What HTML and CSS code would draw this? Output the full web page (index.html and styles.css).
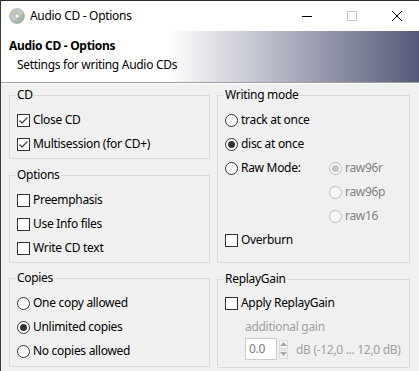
FILE: index.html
```html
<!DOCTYPE html>
<html>
<head>
<meta charset="utf-8">
<link rel="stylesheet" href="styles.css">
</head>
<body>
<div class="window">
  <div class="titlebar">
    <svg class="app-icon" width="16" height="16" viewBox="0 0 16 16">
      <defs>
        <linearGradient id="disc" x1="0" y1="0" x2="1" y2="1">
          <stop offset="0" stop-color="#e8e8ec"/>
          <stop offset="0.35" stop-color="#b9c7d6"/>
          <stop offset="0.5" stop-color="#d9d2a8"/>
          <stop offset="0.65" stop-color="#9fc0a8"/>
          <stop offset="1" stop-color="#9a9aa4"/>
        </linearGradient>
      </defs>
      <circle cx="8" cy="8" r="7.5" fill="url(#disc)" stroke="#9a9aa0" stroke-width="0.6"/>
      <path d="M2.2 6.5 A6 6 0 0 1 6.5 2.2" stroke="#e0b070" stroke-width="1.2" fill="none"/>
      <path d="M3 11.5 A6 6 0 0 0 5 13.3" stroke="#7fb6e0" stroke-width="1.2" fill="none"/>
      <circle cx="8" cy="8" r="2.6" fill="#d8d8dc" stroke="#a0a0a8" stroke-width="0.6"/>
      <circle cx="8" cy="8" r="1.2" fill="#ffffff"/>
    </svg>
    <span class="title">Audio CD - Options</span>
    <div class="controls">
      <div class="ctl"><svg width="10" height="10" viewBox="0 0 10 10"><path d="M0 5.5H10" stroke="#000" stroke-width="1"/></svg></div>
      <div class="ctl"><svg width="10" height="10" viewBox="0 0 10 10"><rect x="0.5" y="0.5" width="9" height="9" fill="none" stroke="#c8c8c8" stroke-width="1"/></svg></div>
      <div class="ctl"><svg width="10" height="10" viewBox="0 0 10 10"><path d="M0 0L10 10M10 0L0 10" stroke="#000" stroke-width="1"/></svg></div>
    </div>
  </div>
  <div class="header">
    <div class="h-title">Audio CD - Options</div>
    <div class="h-sub">Settings for writing Audio CDs</div>
  </div>
  <div class="content">
    <div class="col col-left">
      <div class="group g-cd">
        <span class="gtitle">CD</span>
        <div class="row"><span class="chk checked"><svg width="11" height="11" viewBox="0 0 11 11"><path d="M1.5 5.5L4 8L9.5 2.5" fill="none" stroke="#333" stroke-width="1.1"/></svg></span><span>Close CD</span></div>
        <div class="row"><span class="chk checked"><svg width="11" height="11" viewBox="0 0 11 11"><path d="M1.5 5.5L4 8L9.5 2.5" fill="none" stroke="#333" stroke-width="1.1"/></svg></span><span>Multisession (for CD+)</span></div>
      </div>
      <div class="group g-options">
        <span class="gtitle">Options</span>
        <div class="row"><span class="chk"></span><span>Preemphasis</span></div>
        <div class="row"><span class="chk"></span><span>Use Info files</span></div>
        <div class="row"><span class="chk"></span><span>Write CD text</span></div>
      </div>
      <div class="group g-copies">
        <span class="gtitle">Copies</span>
        <div class="row"><span class="radio"></span><span>One copy allowed</span></div>
        <div class="row"><span class="radio on"></span><span>Unlimited copies</span></div>
        <div class="row"><span class="radio"></span><span>No copies allowed</span></div>
      </div>
    </div>
    <div class="col col-right">
      <div class="group g-writing">
        <span class="gtitle">Writing mode</span>
        <div class="row"><span class="radio"></span><span>track at once</span></div>
        <div class="row"><span class="radio on"></span><span>disc at once</span></div>
        <div class="raw">
          <div class="row"><span class="radio"></span><span>Raw Mode:</span></div>
          <div class="raw-opts">
            <div class="row dis"><span class="radio on disabled"></span><span>raw96r</span></div>
            <div class="row dis"><span class="radio disabled"></span><span>raw96p</span></div>
            <div class="row dis"><span class="radio disabled"></span><span>raw16</span></div>
          </div>
        </div>
        <div class="row"><span class="chk"></span><span>Overburn</span></div>
      </div>
      <div class="group g-replay">
        <span class="gtitle">ReplayGain</span>
        <div class="row"><span class="chk"></span><span>Apply ReplayGain</span></div>
        <div class="sub">
          <div class="sub-label">additional gain</div>
          <div class="spin-row">
            <div class="spin-input">0.0</div>
            <div class="spin-btns">
              <div class="sbtn"><svg width="7" height="4" viewBox="0 0 7 4"><path d="M0 4L3.5 0L7 4Z" fill="#a8a8a8"/></svg></div>
              <div class="sbtn"><svg width="7" height="4" viewBox="0 0 7 4"><path d="M0 0L3.5 4L7 0Z" fill="#a8a8a8"/></svg></div>
            </div>
            <span class="unit">dB (-12,0 ... 12,0 dB)</span>
          </div>
        </div>
      </div>
    </div>
  </div>
</div>
</body>
</html>
```
FILE: styles.css
```css
* { box-sizing: border-box; }
html, body {
  margin: 0;
  padding: 0;
  width: 419px;
  height: 371px;
  overflow: hidden;
  background: #f0f0f0;
}
body {
  font-family: "Noto Sans", "Open Sans", sans-serif;
  font-size: 12px;
  letter-spacing: -0.3px;
  color: #000;
}
.window {
  width: 419px;
  height: 371px;
  border-left: 1px solid #3a3a3a;
  border-top: 1px solid #2a2a2a;
  background: #f0f0f0;
  overflow: hidden;
}
.titlebar {
  height: 30px;
  background: #fff;
  display: flex;
  align-items: center;
  padding-left: 8px;
}
.app-icon { display: block; flex: none; }
.title {
  margin-left: 5px;
  line-height: 16px;
}
.controls {
  margin-left: auto;
  display: flex;
  height: 30px;
}
.ctl {
  width: 45px;
  height: 30px;
  display: flex;
  align-items: center;
  justify-content: center;
}
.ctl svg { display: block; }
.header {
  height: 52px;
  background: linear-gradient(to right, #ffffff 0%, #ffffff 40%, #555a7a 100%);
  border-bottom: 1px solid #a0a0a0;
  box-shadow: 0 1px 0 #ffffff;
  padding: 7px 0 0 8px;
}
.h-title {
  font-weight: bold;
  line-height: 16px;
}
.h-sub {
  line-height: 16px;
  margin-top: 3px;
  padding-left: 8px;
}
.content {
  display: flex;
  gap: 7px;
  padding: 12px 0 0 8px;
}
.col {
  display: flex;
  flex-direction: column;
}
.col-left { width: 201px; }
.col-right { width: 193px; }
.group {
  position: relative;
  border: 1px solid #dcdcdc;
  padding: 12px 0 0 7px;
}
.gtitle {
  position: absolute;
  top: -9px;
  left: 6px;
  padding: 0 1px;
  line-height: 16px;
  background: #f0f0f0;
}
.g-cd { height: 64px; }
.g-options { height: 88px; margin-top: 16px; }
.g-copies { height: 89px; margin-top: 15px; }
.g-writing { height: 168px; }
.g-replay { height: 89px; margin-top: 16px; padding-top: 11px; }
.row {
  height: 24px;
  display: flex;
  align-items: center;
  gap: 3px;
  line-height: 16px;
  white-space: nowrap;
}
.chk {
  width: 13px;
  height: 13px;
  border: 1px solid #333;
  background: #fff;
  flex: none;
  display: flex;
  align-items: center;
  justify-content: center;
}
.chk svg { display: block; }
.radio {
  width: 13px;
  height: 13px;
  border: 1px solid #333;
  border-radius: 50%;
  background: #fff;
  flex: none;
  display: flex;
  align-items: center;
  justify-content: center;
}
.radio.on::after {
  content: "";
  width: 7px;
  height: 7px;
  border-radius: 50%;
  background: #333;
}
.radio.disabled {
  border-color: #bcbcbc;
  background: #f8f8f8;
}
.radio.disabled.on::after { background: #c4c4c4; }
.dis { color: #838383; }
.raw {
  display: grid;
  grid-template-columns: 104px auto;
}
.sub {
  padding-left: 20px;
  color: #a0a0a0;
}
.sub-label {
  height: 24px;
  line-height: 24px;
}
.spin-row {
  display: flex;
  align-items: center;
  height: 22px;
  margin-top: -1px;
}
.spin-input {
  width: 32px;
  height: 22px;
  border: 1px solid #cccccc;
  background: #fff;
  padding-left: 3px;
  line-height: 20px;
  color: #7a7a7a;
}
.spin-btns {
  margin-left: 2px;
  display: flex;
  flex-direction: column;
  gap: 1px;
}
.sbtn {
  width: 9px;
  height: 9px;
  border: 1px solid #dadada;
  background: #f4f4f4;
  display: flex;
  align-items: center;
  justify-content: center;
}
.sbtn svg { display: block; }
.unit {
  margin-left: 8px;
}
```
